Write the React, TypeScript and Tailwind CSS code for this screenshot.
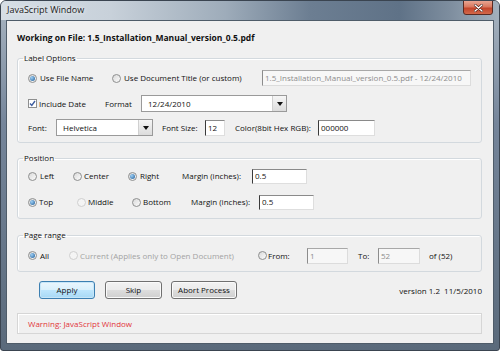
import React from 'react'

function Radio({ checked, disabled }: { checked?: boolean; disabled?: boolean }) {
  return (
    <span
      className={`flex h-[9px] w-[9px] shrink-0 items-center justify-center rounded-full border ${
        disabled
          ? 'border-[#cfcfcf] bg-[#f4f4f4]'
          : 'border-[#8e8f8f] bg-[linear-gradient(135deg,#d9d9d9,#fcfcfc)]'
      }`}
    >
      {checked && (
        <span className="h-[5px] w-[5px] rounded-full bg-[radial-gradient(circle_at_35%_35%,#9fd0f5,#1d5b96)]" />
      )}
    </span>
  )
}

function Option({ label, checked, disabled, dim, w, gap }: { label: string; checked?: boolean; disabled?: boolean; dim?: boolean; w: string; gap: string }) {
  return (
    <div className={`flex items-center ${w} ${gap}`}>
      <Radio checked={checked} disabled={disabled || dim} />
      <span className={disabled ? 'text-[#a3a3a3]' : ''}>{label}</span>
    </div>
  )
}

function TextBox({ value, w, h = 'h-[16px]', disabled }: { value: string; w: string; h?: string; disabled?: boolean }) {
  return (
    <div
      className={`flex items-center border pl-[2px] ${w} ${h} ${
        disabled
          ? 'border-[#dcdcdc] border-l-[#8c8c8c] border-t-[#a8a8a8] bg-[#f7f7f7] text-[#8d8d8d]'
          : 'border-[#dedede] border-l-[#3a3a3a] border-t-[#8a8a8a] bg-white'
      }`}
    >
      {value}
    </div>
  )
}

function Combo({ value, w }: { value: string; w: string }) {
  return (
    <div className={`flex h-[17px] items-center justify-between border border-[#9a9a9a] bg-white pl-[6px] ${w}`}>
      <span>{value}</span>
      <span className="flex h-full w-[14px] items-center justify-center border-l border-[#d0d0d0] bg-[linear-gradient(180deg,#f6f6f6,#dcdcdc)]">
        <svg width="6" height="4" viewBox="0 0 6 4">
          <path d="M0 0h6L3 4z" fill="#111" />
        </svg>
      </span>
    </div>
  )
}

function Group({ title, children, className }: { title: string; children: React.ReactNode; className: string }) {
  return (
    <fieldset className={`w-[465px] rounded-[3px] border border-[#d3d9de] pl-[10px] shadow-[inset_1px_1px_0_#fff] ${className}`}>
      <legend className="-ml-[5px] px-[1px] leading-[12px]">{title}</legend>
      {children}
    </fieldset>
  )
}

function Button({ label, w, primary }: { label: string; w: string; primary?: boolean }) {
  return (
    <div
      className={`flex h-[18px] items-center justify-center rounded-[3px] border ${w} ${
        primary
          ? 'border-[#3c7fb1] bg-[linear-gradient(180deg,#eaf6fd_0%,#d9f0fc_50%,#bee6fd_51%,#a7d9f5_100%)] shadow-[inset_0_0_0_1px_#c7e6f8]'
          : 'border-[#707070] bg-[linear-gradient(180deg,#f2f2f2_0%,#ebebeb_50%,#dddddd_51%,#cfcfcf_100%)] shadow-[inset_0_0_0_1px_#fafafa]'
      }`}
    >
      {label}
    </div>
  )
}

export default function App() {
  return (
    <div className="flex h-[351px] w-[500px] flex-col overflow-hidden rounded-t-[6px] rounded-b-[3px] border border-[#3a4450] bg-[linear-gradient(180deg,#a9b5c1_0%,#75859a_35%,#5a6a7b_100%)] font-['Open_Sans','Noto_Sans',sans-serif] text-[8px] text-[#111]">
      <div className="flex h-[19px] shrink-0 items-start justify-between bg-[linear-gradient(90deg,#d6dee5_0%,#c8d1da_22%,#9eacba_45%,#6c7e92_62%,#5f7287_80%,#7d8d9e_90%,#a3b0bd_100%)] pl-[6px] pr-[6px]">
        <span className="mt-[3px] text-[9px] leading-[12px] text-[#1a1a1a] [text-shadow:0_0_4px_#fff]">JavaScript Window</span>
        <span className="-mt-px flex h-[15px] w-[30px] items-center justify-center rounded-b-[3px] border border-[#5a2a22] bg-[linear-gradient(180deg,#e9a592_0%,#d9785f_45%,#c3452b_55%,#d2684a_100%)]">
          <svg width="9" height="8" viewBox="0 0 9 8">
            <path d="M1 1l7 6M8 1L1 7" stroke="#4a1c14" strokeWidth="2.6" strokeLinecap="round" />
            <path d="M1 1l7 6M8 1L1 7" stroke="#fff" strokeWidth="1.4" strokeLinecap="round" />
          </svg>
        </span>
      </div>

      <div className="mx-[5px] mb-[6px] flex flex-1 flex-col border border-[#4f5c69] bg-[#f0f0f0] pl-[10px] pt-[11px]">
        <div className="text-[8.5px] font-bold leading-[12px]">Working on File: 1.5_Installation_Manual_version_0.5.pdf</div>

        <Group title="Label Options" className="mt-[8px] pb-[6px] pt-[6px]">
          <div className="flex h-[16px] items-center">
            <Option label="Use File Name" checked w="w-[84px]" gap="gap-[3px]" />
            <Option label="Use Document Title (or custom)" w="w-[150px]" gap="gap-[3px]" />
            <TextBox value="1.5_Installation_Manual_version_0.5.pdf - 12/24/2010" w="w-[209px]" disabled />
          </div>
          <div className="mt-[9px] flex h-[17px] items-center">
            <div className="flex w-[77px] items-center gap-[2px]">
              <span className="flex h-[9px] w-[9px] items-center justify-center border border-[#8e8f8f] bg-white">
                <svg width="7" height="7" viewBox="0 0 7 7">
                  <path d="M1 3.5l1.8 2L6 1" stroke="#3f5ea0" strokeWidth="1.4" fill="none" />
                </svg>
              </span>
              <span>Include Date</span>
            </div>
            <span className="w-[36px]">Format</span>
            <Combo value="12/24/2010" w="w-[146px]" />
          </div>
          <div className="mt-[7px] flex h-[17px] items-center">
            <span className="w-[28px]">Font:</span>
            <Combo value="Helvetica" w="w-[97px]" />
            <span className="ml-[9px] w-[43px]">Font Size:</span>
            <TextBox value="12" w="w-[20px]" />
            <span className="ml-[10px] w-[83px]">Color(8bit Hex RGB):</span>
            <TextBox value="000000" w="w-[57px]" />
          </div>
        </Group>

        <Group title="Position" className="mt-[9px] pb-[8px] pt-[4px]">
          <div className="flex h-[16px] items-center">
            <Option label="Left" w="w-[45px]" gap="gap-[3px]" />
            <Option label="Center" w="w-[55px]" gap="gap-[2px]" />
            <Option label="Right" checked w="w-[54px]" gap="gap-[3px]" />
            <span className="w-[70px]">Margin (inches):</span>
            <TextBox value="0.5" w="w-[55px]" h="h-[15px]" />
          </div>
          <div className="mt-[10px] flex h-[16px] items-center">
            <Option label="Top" checked w="w-[49px]" gap="gap-[2px]" />
            <Option label="Middle" dim w="w-[55px]" gap="gap-[2px]" />
            <Option label="Bottom" w="w-[59px]" gap="gap-[2px]" />
            <span className="w-[68px]">Margin (inches):</span>
            <TextBox value="0.5" w="w-[55px]" h="h-[15px]" />
          </div>
        </Group>

        <Group title="Page range" className="mt-[10px] pb-[7px] pt-[6px]">
          <div className="flex h-[17px] items-center">
            <Option label="All" checked w="w-[41px]" gap="gap-[3px]" />
            <Option label="Current (Applies only to Open Document)" disabled w="w-[189px]" gap="gap-[2px]" />
            <Option label="From:" w="w-[49px]" gap="gap-[1px]" />
            <TextBox value="1" w="w-[41px]" disabled />
            <span className="ml-[10px] w-[20px]">To:</span>
            <TextBox value="52" w="w-[42px]" disabled />
            <span className="ml-[9px]">of (52)</span>
          </div>
        </Group>

        <div className="mt-[9px] flex h-[18px] w-[465px] items-center">
          <div className="ml-[22px] flex items-center">
            <Button label="Apply" w="w-[56px]" primary />
            <div className="ml-[10px]">
              <Button label="Skip" w="w-[57px]" />
            </div>
            <div className="ml-[9px]">
              <Button label="Abort Process" w="w-[66px]" />
            </div>
          </div>
          <span className="ml-auto whitespace-pre pt-[2px]">version 1.2  11/5/2010</span>
        </div>

        <div className="mt-[14px] flex h-[21px] w-[465px] items-center border border-[#d6d6d6] pl-[10px] text-[#e2353a] shadow-[inset_1px_1px_0_#fff]">
          Warning: JavaScript Window
        </div>
      </div>
    </div>
  )
}
